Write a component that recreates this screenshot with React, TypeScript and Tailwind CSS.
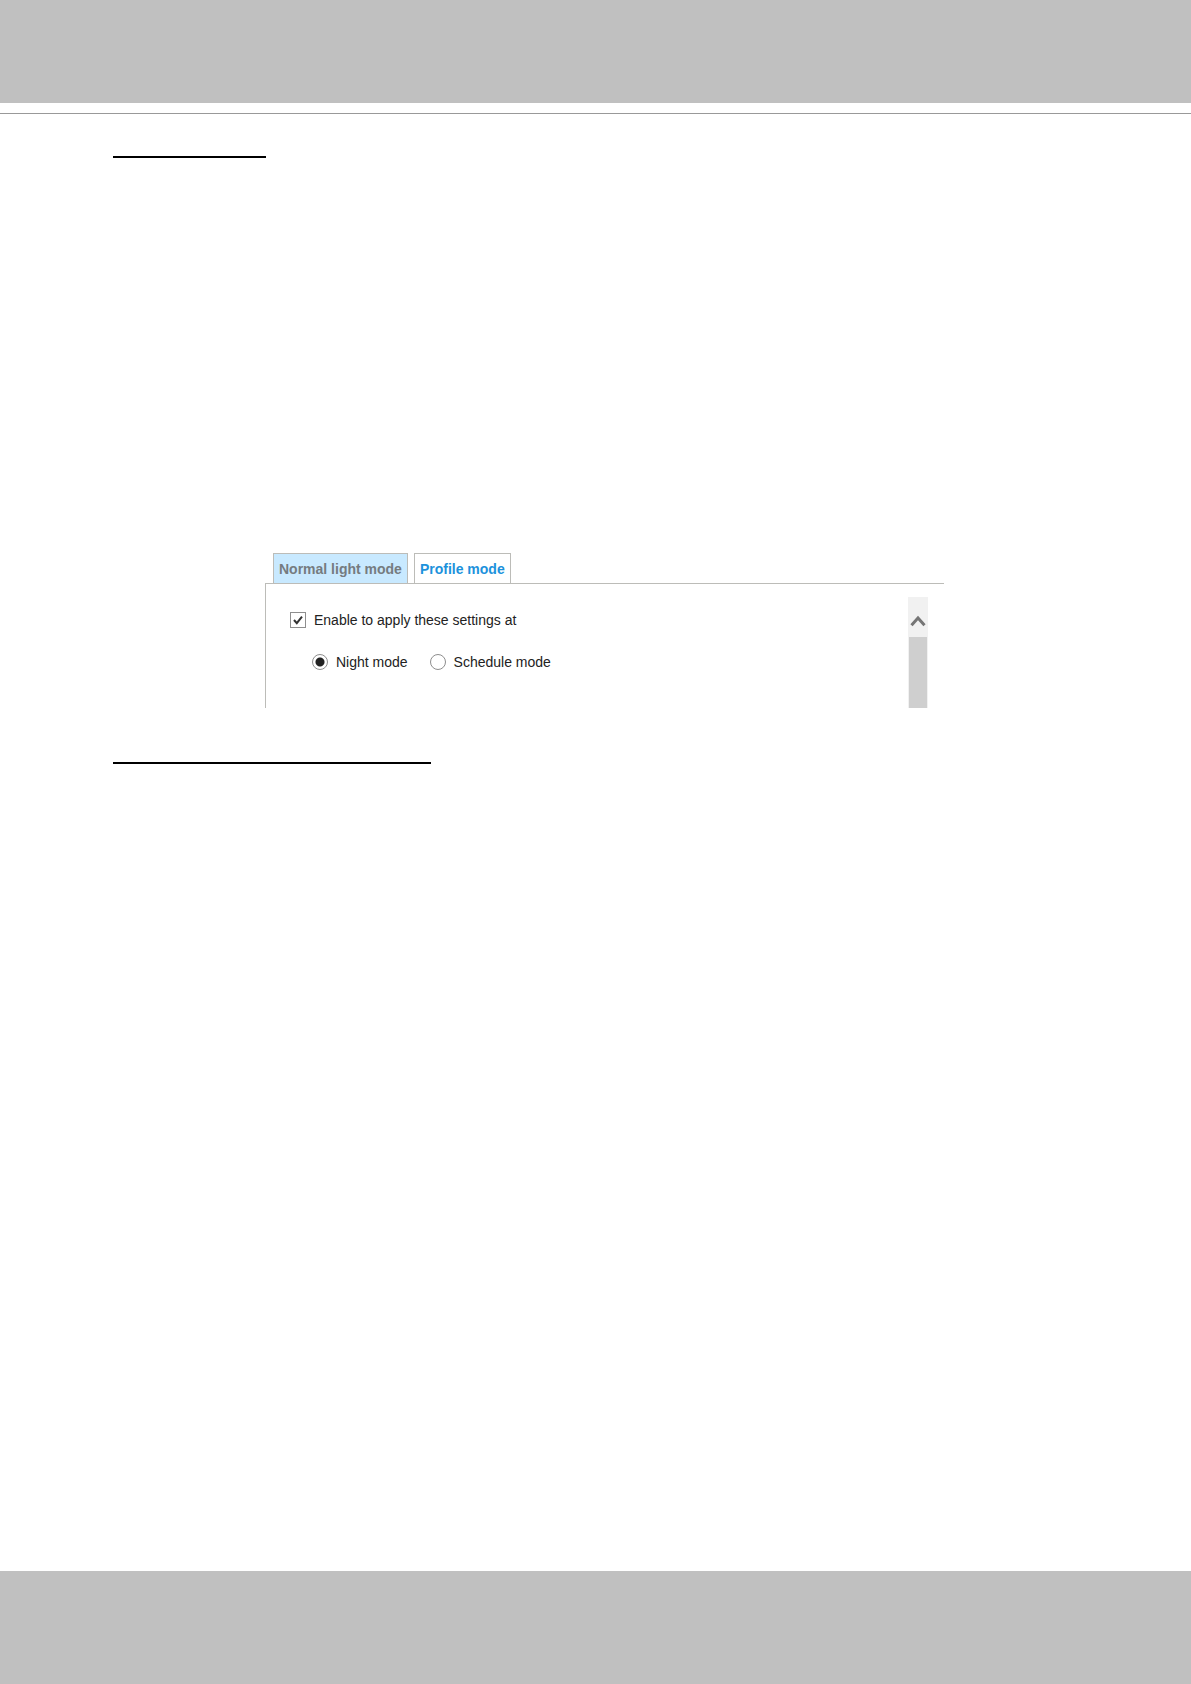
import { useState } from 'react';

const tabs = [
  { id: 'normal', label: 'Normal light mode' },
  { id: 'profile', label: 'Profile mode' },
];

const schedules = [
  { id: 'night', label: 'Night mode' },
  { id: 'schedule', label: 'Schedule mode' },
];

function Tabs({ active, onSelect }: { active: string; onSelect: (id: string) => void }) {
  return (
    <div role="tablist" className="flex gap-1.5 pl-2">
      {tabs.map((tab) => (
        <button
          key={tab.id}
          type="button"
          role="tab"
          aria-selected={tab.id === active}
          onClick={() => onSelect(tab.id)}
          className={[
            'h-[30px] border border-b-0 border-[#bcbcb8] px-[5px] text-sm font-bold',
            tab.id === active ? 'bg-white text-[#1c92dc]' : 'bg-[#c8e9ff] text-[#757b80]',
          ].join(' ')}
        >
          {tab.label}
        </button>
      ))}
    </div>
  );
}

function ScrollBar() {
  return (
    <div className="flex w-5 flex-col bg-[#f1f1f1]">
      <button type="button" aria-label="Scroll up" className="flex h-10 items-center justify-center pt-2">
        <svg width="16" height="12" viewBox="0 0 16 12" fill="none" aria-hidden="true">
          <path d="M1.5 10.2 8 3l6.5 7.2" stroke="#757575" strokeWidth="3" />
        </svg>
      </button>
      <div className="mx-px flex-1 bg-[#cfcfcf]" />
    </div>
  );
}

function Settings() {
  const [tab, setTab] = useState('profile');
  const [enabled, setEnabled] = useState(true);
  const [mode, setMode] = useState('night');

  return (
    <section className="mx-auto w-full max-w-[679px]">
      <Tabs active={tab} onSelect={setTab} />
      <div className="flex justify-between border-t border-l border-[#bcbcb8] pr-4 pl-6">
        <div className="flex flex-col gap-[22px] pt-[26px] pb-9 text-sm text-[#222]">
          <label className="flex items-center gap-2">
            <span className="relative flex">
              <input
                type="checkbox"
                checked={enabled}
                onChange={(e) => setEnabled(e.target.checked)}
                className="peer size-4 appearance-none border border-[#8e8e8e] bg-white"
              />
              <svg
                viewBox="0 0 16 16"
                fill="none"
                aria-hidden="true"
                className="pointer-events-none absolute inset-0 hidden peer-checked:block"
              >
                <path d="m4 8 2.8 3.2L12 4.6" stroke="#333" strokeWidth="2" />
              </svg>
            </span>
            Enable to apply these settings at
          </label>
          <div className="flex gap-[22px] pl-[22px]">
            {schedules.map((item) => (
              <label key={item.id} className="flex items-center gap-2">
                <input
                  type="radio"
                  name="schedule"
                  checked={mode === item.id}
                  onChange={() => setMode(item.id)}
                  className="size-4 appearance-none rounded-full border border-[#8e8e8e] bg-white checked:bg-[radial-gradient(circle,#222_4px,#fff_5px)]"
                />
                {item.label}
              </label>
            ))}
          </div>
        </div>
        <div className="flex pt-[13px]">
          <ScrollBar />
        </div>
      </div>
    </section>
  );
}

export default function App() {
  return (
    <div className="flex min-h-screen flex-col bg-white font-['Liberation_Sans',Arial,sans-serif]">
      <header className="border-b border-[#999] pb-2.5">
        <div className="h-[103px] bg-[#c0c0c0]" />
      </header>
      <main className="flex-1 pt-[42px] pr-[95px] pl-[113px]">
        <hr className="mb-[395px] w-[153px] border-t-2 border-black" />
        <Settings />
        <hr className="mt-[54px] w-[318px] border-t-2 border-black" />
      </main>
      <footer className="h-[113px] bg-[#c0c0c0]" />
    </div>
  );
}
